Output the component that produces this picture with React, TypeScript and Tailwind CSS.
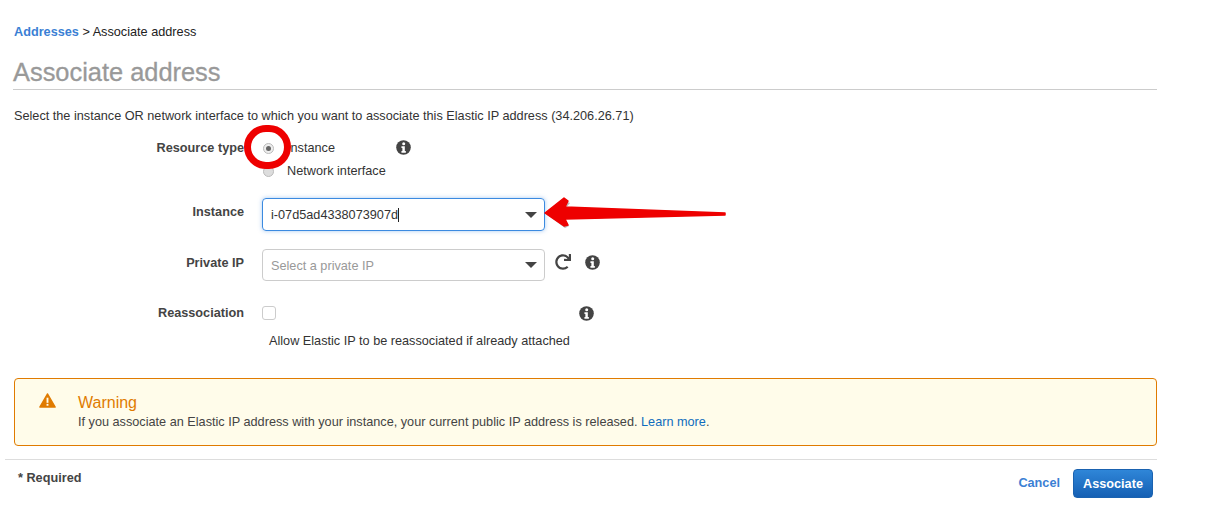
import { FaRedo } from 'react-icons/fa';

function InfoIcon({ className = '' }: { className?: string }) {
  return (
    <svg viewBox="0 0 16 16" className={`w-[15px] h-[15px] shrink-0 ${className}`}>
      <circle cx="8" cy="8" r="7.8" fill="#444" />
      <circle cx="8.2" cy="3.9" r="1.6" fill="#fff" />
      <path d="M5.8 6.6h3.6v5h1.1v1.9H5.8v-1.9h1v-3.1h-1z" fill="#fff" />
    </svg>
  );
}

function Caret() {
  return <span className="w-0 h-0 border-x-[6px] border-x-transparent border-t-[6px] border-t-[#444]" />;
}

function Label({ children }: { children: string }) {
  return <div className="w-[244px] shrink-0 text-right font-bold text-[#444]">{children}</div>;
}

export default function App() {
  return (
    <div
      className="relative w-[1207px] h-[521px] overflow-hidden bg-white text-[12.7px] leading-[16px] text-[#333]"
      style={{ fontFamily: '"Liberation Sans", Arial, sans-serif' }}
    >
      <div className="w-[1157px] pl-[14px] pt-[24px]">
        {/* breadcrumb */}
        <div className="text-[#222]">
          <span className="font-bold text-[#3b7fd4]">Addresses</span> &gt; Associate address
        </div>

        <h1 className="mt-[17px] pb-[1px] h-[32px] -ml-px text-[25.4px] leading-[30px] text-[#999] [-webkit-text-stroke:0.3px_#999]">
          Associate address
        </h1>
        <div className="-ml-px h-px bg-[#ccc]" />

        <p className="mt-[18px] text-[#333]">
          Select the instance OR network interface to which you want to associate this Elastic IP address (34.206.26.71)
        </p>

        {/* form */}
        <div className="-ml-[14px] mt-[16px]">
          <div className="flex">
            <Label>Resource type</Label>
            <div className="ml-[19px] w-[125px]">
              <div className="flex items-center h-[16px]">
                <span className="flex items-center justify-center w-[11px] h-[11px] rounded-full border border-[#bbb] bg-[#eee]">
                  <span className="w-[5px] h-[5px] rounded-full bg-[#666]" />
                </span>
                <span className="ml-[13px]">Instance</span>
              </div>
              <div className="flex items-center h-[16px] mt-[7px]">
                <span className="w-[11px] h-[11px] rounded-full border border-[#bbb] bg-[#ddd]" />
                <span className="ml-[13px] whitespace-nowrap">Network interface</span>
              </div>
            </div>
            <InfoIcon className="ml-[8px]" />
          </div>

          <div className="flex mt-[19px]">
            <div className="pt-[6px]">
              <Label>Instance</Label>
            </div>
            <div className="ml-[18px] flex items-center justify-between w-[283px] h-[33px] pl-[8px] pr-[7px] rounded-[4px] border border-[#3b8ae0] shadow-[0_0_4px_rgba(80,150,230,0.5)]">
              <span>
                i-07d5ad4338073907d<span className="inline-block w-px h-[14px] align-[-3px] bg-[#222]" />
              </span>
              <Caret />
            </div>
          </div>

          <div className="flex mt-[18px]">
            <div className="pt-[6px]">
              <Label>Private IP</Label>
            </div>
            <div className="ml-[18px] flex items-center justify-between w-[283px] h-[32px] pl-[8px] pr-[7px] rounded-[4px] border border-[#ccc]">
              <span className="text-[#999] pt-[1px]">Select a private IP</span>
              <Caret />
            </div>
            <FaRedo className="w-[16px] h-[16px] ml-[10px] mt-[5px] text-[#444]" />
            <InfoIcon className="ml-[14px] mt-[6px]" />
          </div>

          <div className="flex mt-[24px]">
            <Label>Reassociation</Label>
            <div className="ml-[18px]">
              <div className="flex items-center h-[16px]">
                <span className="w-[14px] h-[14px] shrink-0 rounded-[3px] border border-[#ccc] bg-white" />
                <InfoIcon className="ml-[303px]" />
              </div>
              <div className="mt-[12px] ml-[7px]">Allow Elastic IP to be reassociated if already attached</div>
            </div>
          </div>
        </div>

        {/* warning */}
        <div className="mt-[29px] flex h-[68px] rounded-[4px] border border-[#e07b00] bg-[#fffcea] pl-[24px] pt-[14px]">
          <svg viewBox="0 0 18 16" className="w-[17px] h-[15px] shrink-0">
            <path d="M9 1 L17.2 15 H0.8 Z" fill="#e07b00" stroke="#e07b00" strokeWidth="1.4" strokeLinejoin="round" />
            <rect x="8" y="5" width="2" height="5.5" fill="#fffcea" />
            <rect x="8" y="11.6" width="2" height="2" fill="#fffcea" />
          </svg>
          <div className="ml-[22px]">
            <div className="mt-px text-[16px] leading-[18px] text-[#e07b00]">Warning</div>
            <div className="mt-[2px] text-[#444]">
              If you associate an Elastic IP address with your instance, your current public IP address is released.{' '}
              <span className="text-[#0f6cbd]">Learn more</span>.
            </div>
          </div>
        </div>

        {/* footer */}
        <div className="-ml-[9px] mt-[13px] h-px bg-[#ddd]" />
        <div className="flex items-start justify-between mt-[9px] pl-[4px] pr-[4px]">
          <span className="mt-[1px] font-bold text-[#444]">* Required</span>
          <div className="flex items-center">
            <span className="mb-[2px] font-bold text-[#3b7fd4]">Cancel</span>
            <button className="ml-[13px] w-[80px] h-[29px] rounded-[4px] border border-[#1a62b0] bg-gradient-to-b from-[#2f86d8] to-[#1560b4] font-bold text-white">
              Associate
            </button>
          </div>
        </div>
      </div>

      {/* annotations drawn over the screenshot */}
      <div className="absolute left-[244px] top-[125px] w-[47px] h-[44px] rounded-full border-[7px] border-[#ee0000]" />
      <svg className="absolute left-[535px] top-[192px]" width="195" height="40" viewBox="0 0 195 40">
        <path d="M34 10 L29 16 L190 22 L29 26 L33 33 L29 35 L10 21 L29 8 Z" fill="#666" opacity="0.45" transform="translate(1 1)" />
        <path d="M33 9 L30 15 L190 21 L190 23 L30 27 L33 33 L29 34 L10 21 L29 6 Z" fill="#ee0000" stroke="#ee0000" strokeWidth="1.5" strokeLinejoin="round" />
      </svg>
    </div>
  );
}
